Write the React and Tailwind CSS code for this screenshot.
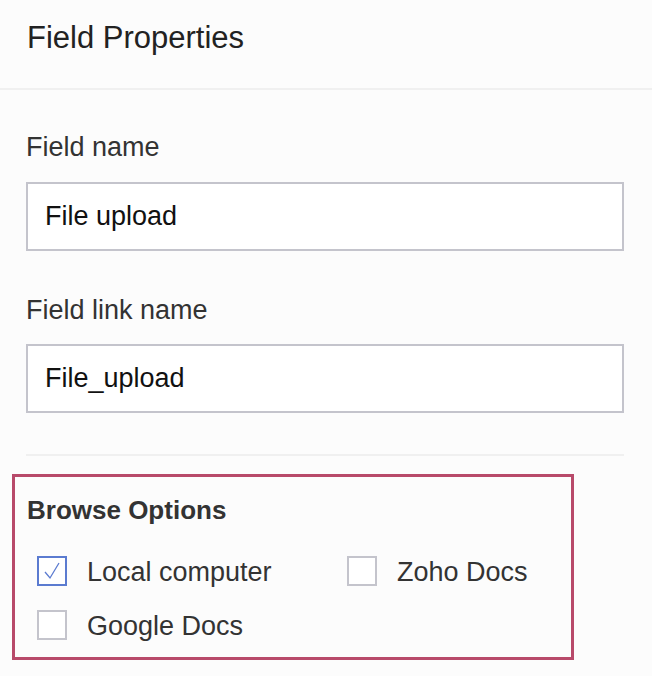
export default function App() {
  const options = [
    { label: 'Local computer', checked: true },
    { label: 'Zoho Docs', checked: false },
    { label: 'Google Docs', checked: false },
  ];

  return (
    <div className="w-[652px] h-[676px] bg-[#fcfcfc] text-[#333] overflow-hidden" style={{ fontFamily: '"Liberation Sans", Arial, sans-serif' }}>
      <div className="h-[90px] border-b-2 border-[#f0f0f0] px-[27px] pt-[20px]">
        <h1 className="text-[31px] leading-[36px] text-[#222]">Field Properties</h1>
      </div>

      <div className="px-[26px] pt-[41px]">
        <label className="block text-[27px] leading-[32px]">Field name</label>
        <div className="mt-[19px] h-[69px] w-[598px] border-2 border-[#c4c4cc] bg-white flex items-center px-[17px] text-[27px] text-[#111]">
          File upload
        </div>

        <label className="block mt-[43px] text-[27px] leading-[32px]">Field link name</label>
        <div className="mt-[18px] h-[69px] w-[598px] border-2 border-[#c4c4cc] bg-white flex items-center px-[17px] text-[27px] text-[#111]">
          File_upload
        </div>

        <div className="mt-[41px] w-[598px] border-t-2 border-[#f0f0f0]"></div>
      </div>

      <div className="ml-[12px] mt-[18px] w-[562px] h-[186px] border-[3px] border-[#b84a6a] pt-[17px]">
        <h2 className="pl-[12px] text-[26px] leading-[32px] font-bold">Browse Options</h2>
        <div className="mt-[30px] ml-[22px] grid grid-cols-[310px_1fr] gap-y-[24px]">
          {options.map((o) => (
            <div key={o.label} className="flex items-center gap-[20px] h-[30px]">
              <span className={`w-[30px] h-[30px] shrink-0 border-2 bg-white flex items-center justify-center ${o.checked ? 'border-[#5b7bd0]' : 'border-[#c4c4cc]'}`}>
                {o.checked && (
                  <svg width="20" height="20" viewBox="0 0 20 20" fill="none">
                    <path d="M3 11 L8 17 L17 2" stroke="#5b7bd0" strokeWidth="1.3" />
                  </svg>
                )}
              </span>
              <span className="text-[27px] leading-[32px] pt-[2px]">{o.label}</span>
            </div>
          ))}
        </div>
      </div>
    </div>
  );
}
